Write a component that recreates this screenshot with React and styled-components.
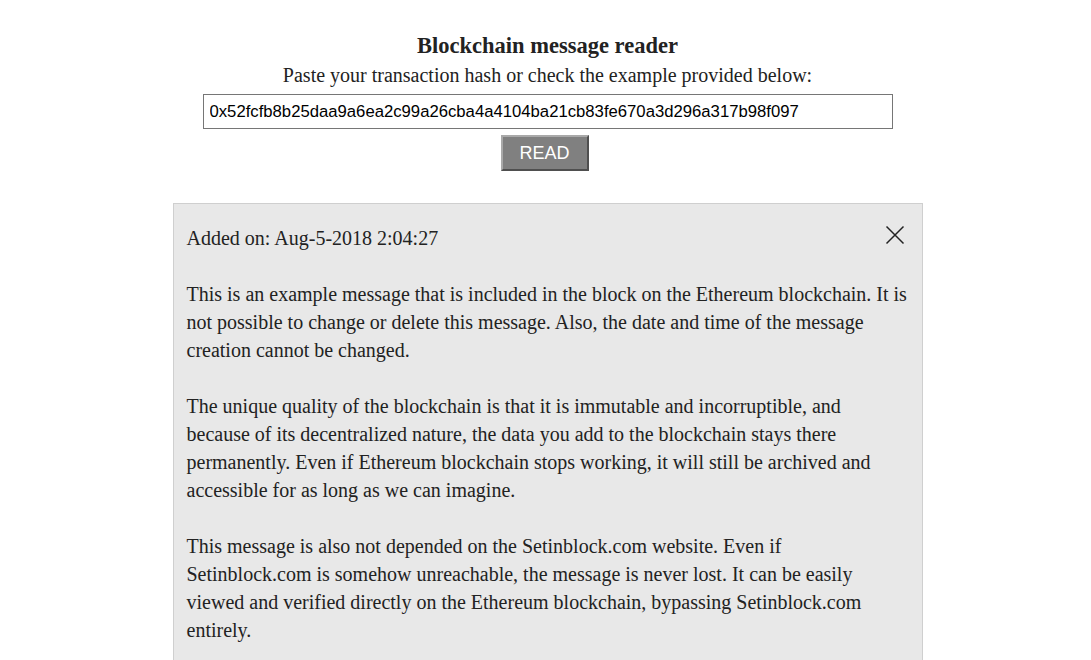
import React from 'react';
import styled, { createGlobalStyle } from 'styled-components';

const GlobalStyle = createGlobalStyle`
  body {
    margin: 0;
    background: #fff;
    font-family: "Liberation Serif", "Times New Roman", serif;
    color: #222;
  }
`;

const Page = styled.div`
  display: flex;
  flex-direction: column;
  align-items: center;
  padding: 32px 0 0 4px;
`;

const Title = styled.h1`
  margin: 0;
  font-size: 22.5px;
  line-height: 27px;
  font-weight: bold;
  color: #222;
`;

const Subtitle = styled.p`
  margin: 4px 0 0;
  font-size: 20px;
  line-height: 24px;
  color: #222;
`;

const HashInput = styled.input`
  box-sizing: border-box;
  width: 690px;
  height: 35px;
  margin-top: 7px;
  padding: 0 6px;
  border: 1px solid #767676;
  font-family: "Liberation Sans", Arial, sans-serif;
  font-size: 16.7px;
  color: #000;
  outline: none;
`;

const ReadButton = styled.button`
  box-sizing: border-box;
  width: 88px;
  height: 36px;
  margin: 6px 6px 0 0;
  background: #808080;
  color: #fff;
  font-family: "Liberation Sans", Arial, sans-serif;
  font-size: 18px;
  border: 2px solid;
  border-color: #a9a9a9 #4f4f4f #4f4f4f #a9a9a9;
  cursor: pointer;
`;

const Panel = styled.section`
  position: relative;
  box-sizing: border-box;
  width: 750px;
  margin-top: 32px;
  padding: 20px 13px 28px 13px;
  background: #e8e8e8;
  border: 1px solid #cfcfcf;
  font-size: 20px;
  line-height: 28px;
  color: #222;
`;

const Para = styled.p`
  margin: 0 0 28px;
`;

const CloseButton = styled.button`
  position: absolute;
  top: 20px;
  right: 16px;
  width: 22px;
  height: 22px;
  padding: 0;
  border: 0;
  background: transparent;
  display: flex;
  align-items: center;
  justify-content: center;
  cursor: pointer;
`;

const CloseIcon = () => (
  <svg width="20" height="20" viewBox="0 0 20 20">
    <path d="M1.5 1.5 L18.5 18.5 M18.5 1.5 L1.5 18.5" stroke="#222" strokeWidth="1.5" fill="none" />
  </svg>
);

const App = () => (
  <>
    <GlobalStyle />
    <Page>
      <Title>Blockchain message reader</Title>
      <Subtitle>Paste your transaction hash or check the example provided below:</Subtitle>
      <HashInput defaultValue="0x52fcfb8b25daa9a6ea2c99a26cba4a4104ba21cb83fe670a3d296a317b98f097" />
      <ReadButton>READ</ReadButton>
      <Panel>
        <CloseButton><CloseIcon /></CloseButton>
        <Para>Added on: Aug-5-2018 2:04:27</Para>
        <Para>
          This is an example message that is included in the block on the Ethereum blockchain. It is not
          possible to change or delete this message. Also, the date and time of the message creation cannot
          be changed.
        </Para>
        <Para>
          The unique quality of the blockchain is that it is immutable and incorruptible, and because of its
          decentralized nature, the data you add to the blockchain stays there permanently. Even if Ethereum
          blockchain stops working, it will still be archived and accessible for as long as we can imagine.
        </Para>
        <Para>
          This message is also not depended on the Setinblock.com website. Even if Setinblock.com is somehow
          unreachable, the message is never lost. It can be easily viewed and verified directly on the
          Ethereum blockchain, bypassing Setinblock.com entirely.
        </Para>
      </Panel>
    </Page>
  </>
);

export default App;
